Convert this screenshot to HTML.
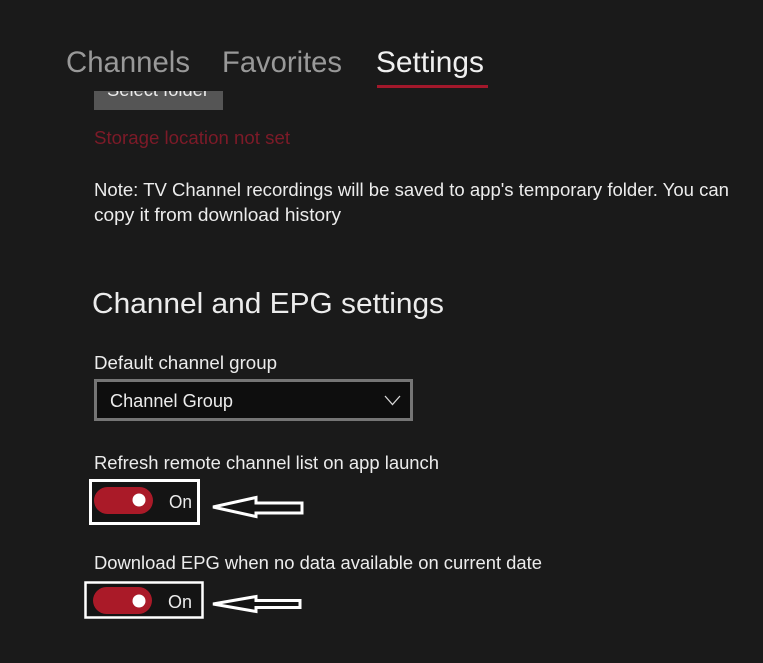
<!DOCTYPE html>
<html lang="en">
<head>
<meta charset="utf-8">
<title>Settings</title>
<style>
html,body{margin:0;padding:0;background:#1a1a1a;width:763px;height:663px;overflow:hidden}
svg{display:block}
text{font-family:"Liberation Sans",sans-serif;fill:#ececec}
</style>
</head>
<body>
<svg width="763" height="663" viewBox="0 0 763 663" xmlns="http://www.w3.org/2000/svg">
<defs>
<clipPath id="btn"><rect x="94" y="91" width="129" height="19"/></clipPath>
</defs>
<rect width="763" height="663" fill="#1a1a1a"/>

<!-- Tabs -->
<text x="66" y="72" font-size="30" textLength="124" lengthAdjust="spacingAndGlyphs" style="fill:#999999">Channels</text>
<text x="222" y="72" font-size="30" textLength="120" lengthAdjust="spacingAndGlyphs" style="fill:#999999">Favorites</text>
<text x="376" y="72" font-size="30" textLength="108" lengthAdjust="spacingAndGlyphs" style="fill:#f0f0f0">Settings</text>
<rect x="377" y="85" width="111" height="3" fill="#a3182b"/>

<!-- Clipped button -->
<rect x="94" y="91" width="129" height="19" fill="#555555"/>
<g clip-path="url(#btn)">
<text x="107" y="96" font-size="18" textLength="102" lengthAdjust="spacingAndGlyphs">Select folder</text>
</g>

<!-- Storage -->
<text x="94" y="144" font-size="18" textLength="196" lengthAdjust="spacingAndGlyphs" style="fill:#7d1a28">Storage location not set</text>

<!-- Note -->
<text x="94" y="196" font-size="18" textLength="635" lengthAdjust="spacingAndGlyphs">Note: TV Channel recordings will be saved to app's temporary folder. You can</text>
<text x="94" y="221" font-size="18" textLength="247" lengthAdjust="spacingAndGlyphs">copy it from download history</text>

<!-- Heading -->
<text x="92" y="313" font-size="29" textLength="352" lengthAdjust="spacingAndGlyphs">Channel and EPG settings</text>

<!-- Dropdown -->
<text x="94" y="369" font-size="18" textLength="183" lengthAdjust="spacingAndGlyphs">Default channel group</text>
<rect x="95.500" y="380.500" width="316" height="39" fill="#0e0e0e" stroke="#757575" stroke-width="3"/>
<text x="110" y="407" font-size="18" textLength="123" lengthAdjust="spacingAndGlyphs">Channel Group</text>
<path d="M385 396 L392.500 404.500 L400 396" fill="none" stroke="#d8d8d8" stroke-width="1.300"/>

<!-- Toggle 1 -->
<text x="94" y="469" font-size="18" textLength="345" lengthAdjust="spacingAndGlyphs">Refresh remote channel list on app launch</text>
<rect x="90.500" y="480.500" width="108" height="43" fill="#141414" stroke="#ffffff" stroke-width="3"/>
<rect x="94" y="487" width="59" height="27" rx="13.500" fill="#aa1a28"/>
<circle cx="139" cy="500" r="6.500" fill="#ffffff"/>
<text x="169" y="508" font-size="18" textLength="23" lengthAdjust="spacingAndGlyphs">On</text>
<path d="M213 507 L256 497.500 L256 503 L302 503 L302 513 L256 513 L256 516.500 Z" fill="#141414" stroke="#ffffff" stroke-width="3"/>

<!-- Toggle 2 -->
<text x="94" y="569" font-size="18" textLength="448" lengthAdjust="spacingAndGlyphs">Download EPG when no data available on current date</text>
<rect x="85.500" y="582.500" width="117" height="35" fill="#141414" stroke="#ffffff" stroke-width="2.500"/>
<rect x="93" y="587" width="59" height="27" rx="13.500" fill="#aa1a28"/>
<circle cx="139" cy="601" r="6.500" fill="#ffffff"/>
<text x="168" y="608" font-size="18" textLength="24" lengthAdjust="spacingAndGlyphs">On</text>
<path d="M213 604 L256 596.500 L256 600.500 L300 600.500 L300 607.500 L256 607.500 L256 611.500 Z" fill="#141414" stroke="#ffffff" stroke-width="3"/>
</svg>
</body>
</html>
